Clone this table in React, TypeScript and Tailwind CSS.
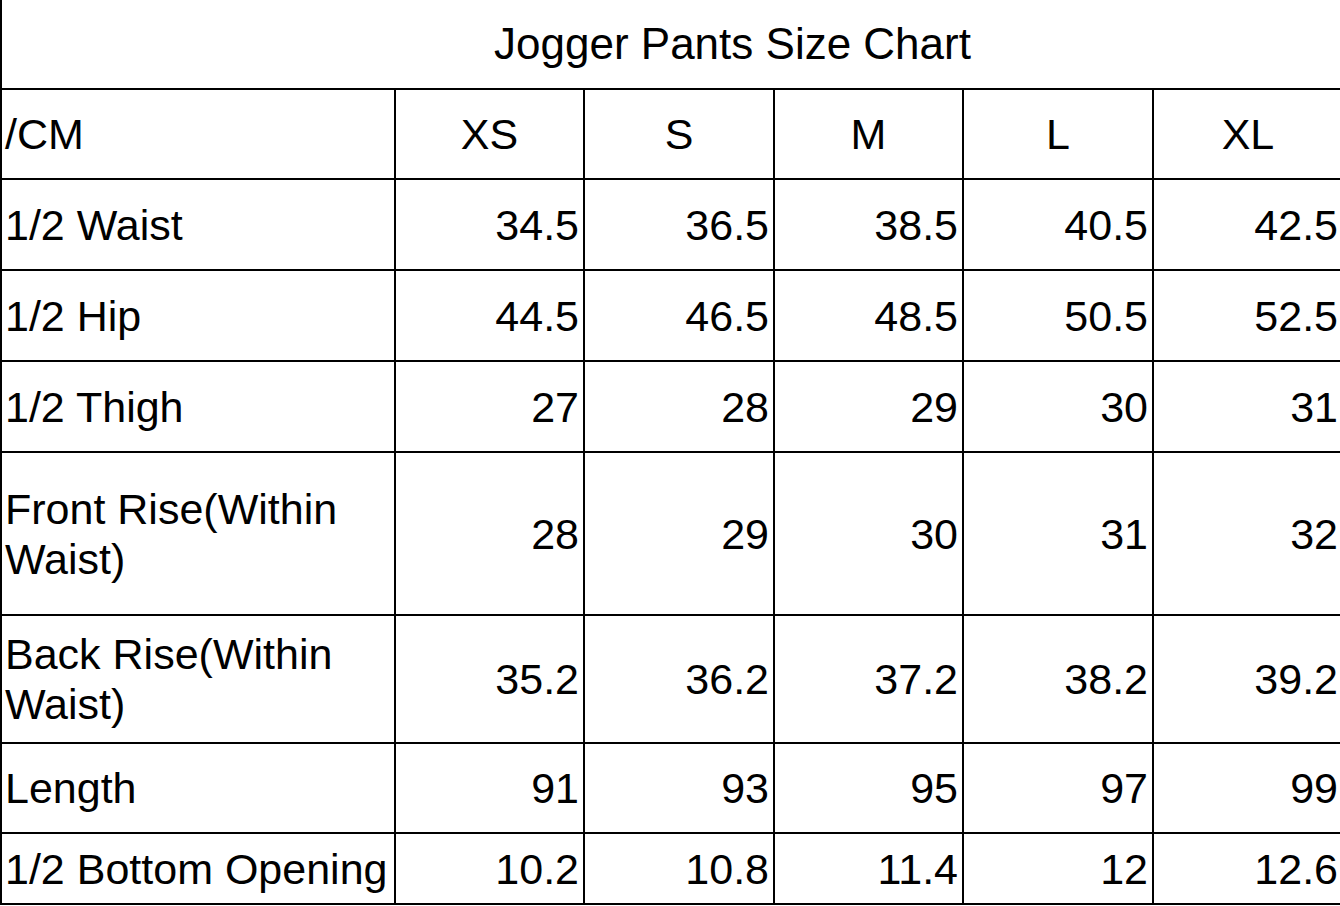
import React from 'react';

const sizes = ['XS', 'S', 'M', 'L', 'XL'];

const rows: { label: string; values: string[]; nowrap?: boolean }[] = [
  { label: '1/2 Waist', values: ['34.5', '36.5', '38.5', '40.5', '42.5'] },
  { label: '1/2 Hip', values: ['44.5', '46.5', '48.5', '50.5', '52.5'] },
  { label: '1/2 Thigh', values: ['27', '28', '29', '30', '31'] },
  { label: 'Front Rise(Within Waist)', values: ['28', '29', '30', '31', '32'] },
  { label: 'Back Rise(Within Waist)', values: ['35.2', '36.2', '37.2', '38.2', '39.2'] },
  { label: 'Length', values: ['91', '93', '95', '97', '99'] },
  { label: '1/2 Bottom Opening', values: ['10.2', '10.8', '11.4', '12', '12.6'], nowrap: true },
];

const cell = 'flex items-center border-r-2 border-b-2 border-black overflow-hidden';

const App: React.FC = () => {
  return (
    <div
      className="w-[1340px] h-[906px] overflow-hidden bg-white text-black text-[43px] leading-[50px]"
      style={{ fontFamily: '"Liberation Sans", Arial, Helvetica, sans-serif' }}
    >
      <div className="grid w-[1344px] grid-cols-[396px_189px_190px_189px_190px_190px] grid-rows-[90px_90px_91px_91px_91px_163px_128px_90px_71px]">
        <div className="col-span-6 flex items-center justify-center border-l-2 border-b-2 border-black pl-[119px] text-[44px]">
          Jogger Pants Size Chart
        </div>

        <div className={`${cell} border-l-2 pl-[3px]`}>/CM</div>
        {sizes.map((s) => (
          <div key={s} className={`${cell} justify-center`}>
            {s}
          </div>
        ))}

        {rows.map((row) => (
          <React.Fragment key={row.label}>
            <div className={`${cell} border-l-2 pl-[3px] ${row.nowrap ? 'whitespace-nowrap' : 'pr-[24px]'}`}>
              {row.label}
            </div>
            {row.values.map((v, i) => (
              <div key={i} className={`${cell} justify-end pr-[4px]`}>
                {v}
              </div>
            ))}
          </React.Fragment>
        ))}
      </div>
    </div>
  );
};

export default App;
